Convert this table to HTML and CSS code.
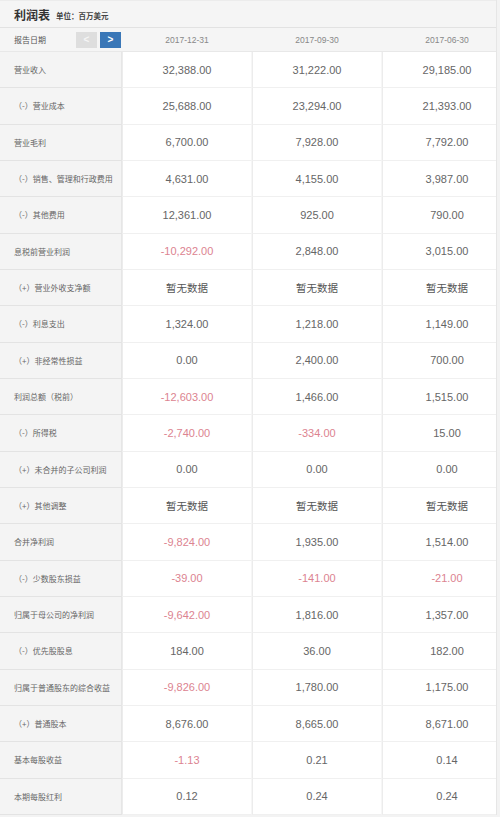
FILE: index.html
```html
<!DOCTYPE html>
<html lang="zh-CN">
<head>
<meta charset="utf-8">
<title>利润表</title>
<link rel="stylesheet" href="styles.css">
</head>
<body>
<div class="panel">
  <div class="titlebar">
    <span class="title">利润表</span>
    <span class="unit">单位：百万美元</span>
  </div>
  <div class="grid">
    <div class="head label-head">
      <span>报告日期</span>
      <span class="btns">
        <span class="btn prev">&lt;</span>
        <span class="btn next">&gt;</span>
      </span>
    </div>
    <div class="head date">2017-12-31</div>
    <div class="head date">2017-09-30</div>
    <div class="head date">2017-06-30</div>

    <div class="lab">营业收入</div><div class="val">32,388.00</div><div class="val">31,222.00</div><div class="val">29,185.00</div>
    <div class="lab">（-）营业成本</div><div class="val">25,688.00</div><div class="val">23,294.00</div><div class="val">21,393.00</div>
    <div class="lab">营业毛利</div><div class="val">6,700.00</div><div class="val">7,928.00</div><div class="val">7,792.00</div>
    <div class="lab">（-）销售、管理和行政费用</div><div class="val">4,631.00</div><div class="val">4,155.00</div><div class="val">3,987.00</div>
    <div class="lab">（-）其他费用</div><div class="val">12,361.00</div><div class="val">925.00</div><div class="val">790.00</div>
    <div class="lab">息税前营业利润</div><div class="val neg">-10,292.00</div><div class="val">2,848.00</div><div class="val">3,015.00</div>
    <div class="lab">（+）营业外收支净额</div><div class="val na">暂无数据</div><div class="val na">暂无数据</div><div class="val na">暂无数据</div>
    <div class="lab">（-）利息支出</div><div class="val">1,324.00</div><div class="val">1,218.00</div><div class="val">1,149.00</div>
    <div class="lab">（+）非经常性损益</div><div class="val">0.00</div><div class="val">2,400.00</div><div class="val">700.00</div>
    <div class="lab">利润总额（税前）</div><div class="val neg">-12,603.00</div><div class="val">1,466.00</div><div class="val">1,515.00</div>
    <div class="lab">（-）所得税</div><div class="val neg">-2,740.00</div><div class="val neg">-334.00</div><div class="val">15.00</div>
    <div class="lab">（+）未合并的子公司利润</div><div class="val">0.00</div><div class="val">0.00</div><div class="val">0.00</div>
    <div class="lab">（+）其他调整</div><div class="val na">暂无数据</div><div class="val na">暂无数据</div><div class="val na">暂无数据</div>
    <div class="lab">合并净利润</div><div class="val neg">-9,824.00</div><div class="val">1,935.00</div><div class="val">1,514.00</div>
    <div class="lab">（-）少数股东损益</div><div class="val neg">-39.00</div><div class="val neg">-141.00</div><div class="val neg">-21.00</div>
    <div class="lab">归属于母公司的净利润</div><div class="val neg">-9,642.00</div><div class="val">1,816.00</div><div class="val">1,357.00</div>
    <div class="lab">（-）优先股股息</div><div class="val">184.00</div><div class="val">36.00</div><div class="val">182.00</div>
    <div class="lab">归属于普通股东的综合收益</div><div class="val neg">-9,826.00</div><div class="val">1,780.00</div><div class="val">1,175.00</div>
    <div class="lab">（+）普通股本</div><div class="val">8,676.00</div><div class="val">8,665.00</div><div class="val">8,671.00</div>
    <div class="lab">基本每股收益</div><div class="val neg">-1.13</div><div class="val">0.21</div><div class="val">0.14</div>
    <div class="lab">本期每股红利</div><div class="val">0.12</div><div class="val">0.24</div><div class="val">0.24</div>
  </div>
</div>
</body>
</html>
```

FILE: styles.css
```css
html, body {
  margin: 0;
  padding: 0;
  background: #f3f3f3;
}
body {
  font-family: "Liberation Sans", "Noto Sans CJK SC", sans-serif;
  color: #666;
}
.panel {
  width: 496px;
  border-right: 1px solid #e6e6e6;
  overflow: hidden;
  background: #f4f4f4;
}
.titlebar {
  height: 28px;
  box-sizing: border-box;
  display: flex;
  align-items: center;
  padding-left: 14px;
  gap: 6px;
  background: #f5f5f5;
  border-top: 1px solid #ececec;
  border-bottom: 1px solid #e2e2e2;
}
.title {
  font-family: "Noto Sans CJK SC", sans-serif;
  font-size: 12px;
  font-weight: bold;
  color: #333;
}
.unit {
  font-family: "Noto Sans CJK SC", sans-serif;
  font-size: 7.5px;
  font-weight: bold;
  color: #444;
  padding-top: 2px;
}
.grid {
  display: grid;
  grid-template-columns: 122px 130px 130px 130px;
  grid-template-rows: 24px;
  grid-auto-rows: 36.33px;
  width: 512px;
}
.head {
  background: #f5f5f5;
  border-bottom: 1px solid #e8e8e8;
  box-sizing: border-box;
  display: flex;
  align-items: center;
}
.label-head {
  padding-left: 14px;
  justify-content: space-between;
  font-family: "Noto Sans CJK SC", sans-serif;
  font-size: 8px;
  color: #555;
}
.btns {
  display: flex;
  gap: 3px;
  margin-right: 1px;
}
.btn {
  width: 21px;
  height: 16px;
  display: flex;
  align-items: center;
  justify-content: center;
  font-family: "Liberation Sans", sans-serif;
  font-size: 10px;
  font-weight: bold;
  color: #fff;
}
.prev {
  background: #dedede;
  color: #f5f5f5;
}
.next {
  background: #3a77b7;
}
.date {
  justify-content: center;
  font-size: 8.5px;
  color: #888;
}
.lab {
  box-sizing: border-box;
  padding-left: 14px;
  display: flex;
  align-items: center;
  font-family: "Noto Sans CJK SC", sans-serif;
  font-size: 8px;
  color: #666;
  background: #f4f4f4;
  border-bottom: 1px solid #e3e3e3;
  border-right: 1px solid #e6e6e6;
  white-space: nowrap;
}
.val {
  box-sizing: border-box;
  display: flex;
  align-items: center;
  justify-content: center;
  font-size: 11px;
  color: #666;
  background: #fff;
  border-bottom: 1px solid #f0f0f0;
  border-left: 1px solid #ececec;
  border-right: 1px solid #f6f6f6;
}
.neg {
  color: #dc8390;
}
.na {
  font-family: "Noto Sans CJK SC", sans-serif;
  font-size: 10.5px;
  color: #555;
}
```
